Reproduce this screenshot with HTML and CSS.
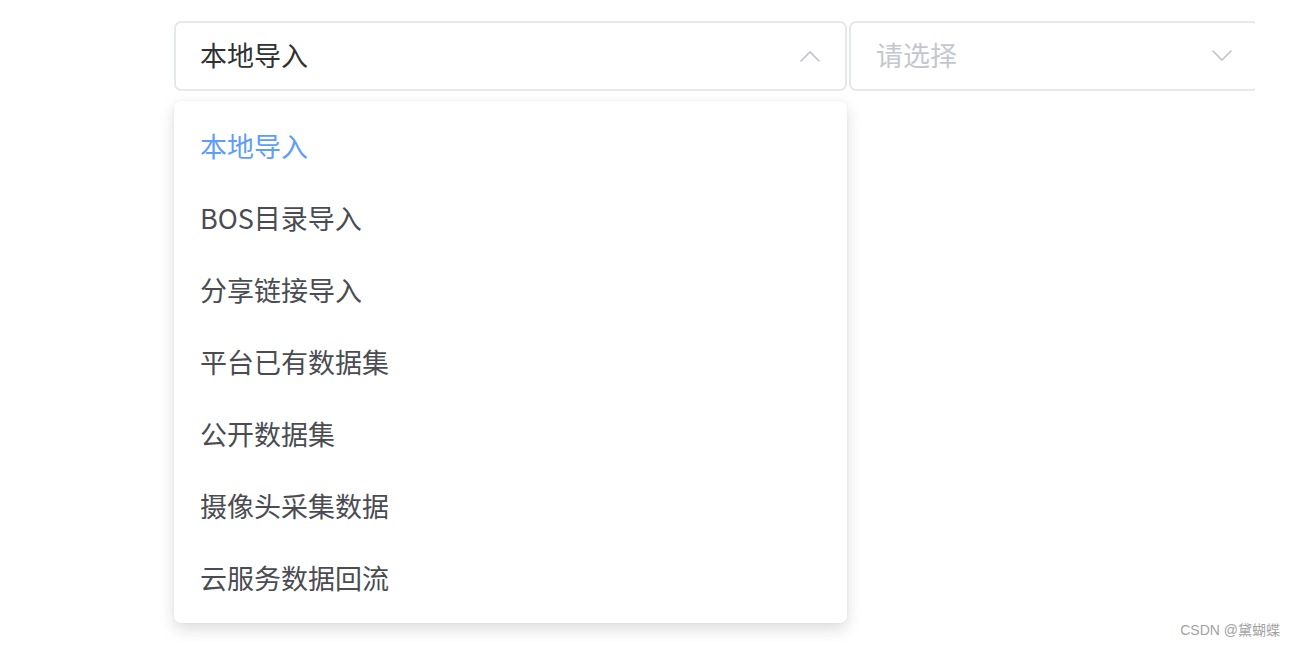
FILE: index.html
```html
<!DOCTYPE html>
<html lang="zh-CN">
<head>
<meta charset="utf-8">
<link rel="stylesheet" href="styles.css">
</head>
<body>
<div class="page">
  <div class="row">
    <div class="select-wrap first">
      <div class="select is-focus">
        <span class="value">本地导入</span>
        <svg class="arrow" width="22" height="14" viewBox="0 0 22 14"><path d="M1.5 12.5 L11 3 L20.5 12.5" fill="none" stroke="#c0c4cc" stroke-width="1.6"/></svg>
      </div>
      <ul class="dropdown">
        <li class="item selected">本地导入</li>
        <li class="item">BOS目录导入</li>
        <li class="item">分享链接导入</li>
        <li class="item">平台已有数据集</li>
        <li class="item">公开数据集</li>
        <li class="item">摄像头采集数据</li>
        <li class="item">云服务数据回流</li>
      </ul>
    </div>
    <div class="select-wrap second">
      <div class="select wide">
        <span class="placeholder">请选择</span>
        <svg class="arrow" width="22" height="14" viewBox="0 0 22 14"><path d="M1.5 1.5 L11 11 L20.5 1.5" fill="none" stroke="#c0c4cc" stroke-width="1.6"/></svg>
      </div>
    </div>
  </div>
  <div class="watermark">CSDN @黛蝴蝶</div>
</div>
</body>
</html>
```
FILE: styles.css
```css
html, body {
  margin: 0;
  padding: 0;
  background: #ffffff;
}
body {
  font-family: "Noto Sans CJK SC", "Noto Sans", sans-serif;
  width: 1295px;
  height: 646px;
  overflow: hidden;
}
.page {
  position: relative;
  width: 1295px;
  height: 646px;
}
.row {
  display: flex;
  gap: 2px;
  padding: 21px 0 0 174px;
}
.select-wrap {
  position: relative;
}
.select-wrap.first {
  width: 673px;
}
.select-wrap.second {
  width: 406px;
  overflow: hidden;
}
.select {
  box-sizing: border-box;
  height: 70px;
  border: 2px solid #e6e8ec;
  border-radius: 7px;
  display: flex;
  align-items: center;
  justify-content: space-between;
  padding: 0 24px 3px 24px;
  font-size: 27px;
  background: #fff;
}
.select.wide {
  width: 410px;
}
.value {
  color: #303133;
}
.placeholder {
  color: #c4c7cd;
  margin-left: 1px;
}
.arrow {
  display: block;
  margin-top: 2px;
}
.dropdown {
  position: absolute;
  left: 0;
  top: 80px;
  width: 673px;
  box-sizing: border-box;
  margin: 0;
  padding: 9px 0 9px 0;
  list-style: none;
  background: #fff;
  border-radius: 7px;
  box-shadow: 0 6px 16px rgba(0, 0, 0, 0.14), 0 0 3px rgba(0, 0, 0, 0.05);
}
.item {
  height: 72px;
  line-height: 72px;
  padding-left: 26px;
  font-size: 27px;
  color: #4a4c52;
}
.item.selected {
  color: #5e9dfb;
}
.watermark {
  position: absolute;
  right: 15px;
  top: 619px;
  font-family: "Liberation Sans", "Noto Sans CJK SC", sans-serif;
  font-size: 14px;
  color: #a2a2a2;
}
```
